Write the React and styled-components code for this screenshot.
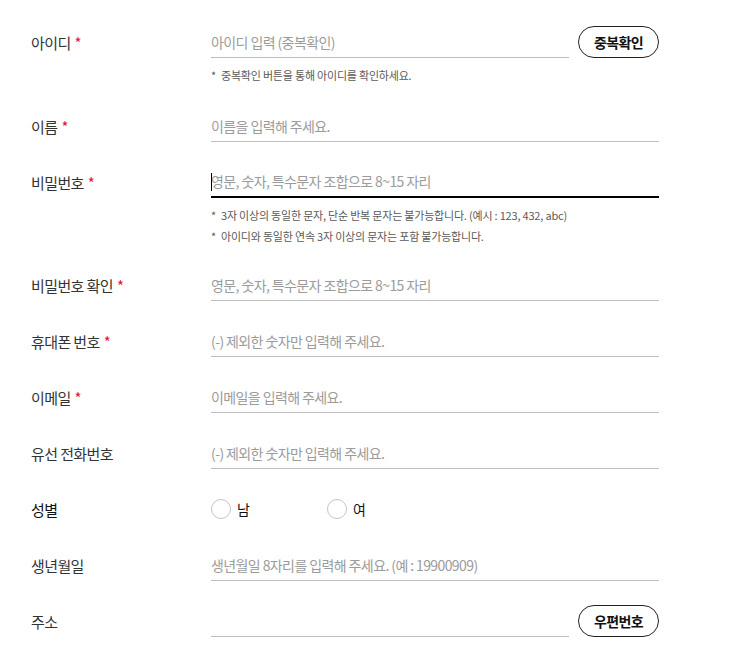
import React from "react";
import styled, { createGlobalStyle } from "styled-components";

const Global = createGlobalStyle`
  html, body { margin: 0; padding: 0; background: #fff; }
  body { font-family: "Noto Sans CJK KR", "Noto Sans", sans-serif; color: #333; }
  * { box-sizing: border-box; }
`;

const Form = styled.form`
  display: flex;
  flex-direction: column;
  gap: 24px;
  padding: 26px 0 0 31px;
  width: 659px;
`;

const Row = styled.div`
  display: grid;
  grid-template-columns: 180px 448px;
  align-items: start;
`;

const Label = styled.div`
  height: 32px;
  display: flex;
  align-items: center;
  font-size: 15px;
  letter-spacing: -0.6px;
  color: ${(p) => (p.$dark ? "#111" : "#333")};
`;

const Star = styled.span`
  color: #e2133d;
  margin-left: 4px;
`;

const Field = styled.div`
  display: flex;
  flex-direction: column;
`;

const InputLine = styled.div`
  display: flex;
  align-items: center;
  gap: 9px;
`;

const InputWrap = styled.div`
  position: relative;
  flex: 1;
`;

const Input = styled.input`
  display: block;
  width: 100%;
  height: 32px;
  border: 0;
  border-bottom: ${(p) => (p.$focus ? "2px solid #000" : "1px solid #bdbdbd")};
  padding: 0 0 ${(p) => (p.$focus ? "1px" : "0")};
  font-family: inherit;
  font-size: 14px;
  letter-spacing: -0.6px;
  color: #333;
  outline: none;
  background: transparent;
  &::placeholder { color: #9b9b9b; }
`;

const Caret = styled.span`
  position: absolute;
  left: 0;
  top: 7px;
  width: 1px;
  height: 18px;
  background: #000;
`;

const PillButton = styled.button`
  width: 81px;
  height: 32px;
  border: 1px solid #222;
  border-radius: 16px;
  background: #fff;
  font-family: inherit;
  font-size: 14px;
  font-weight: 700;
  letter-spacing: -0.6px;
  color: #111;
  cursor: pointer;
  padding: 0;
`;

const Help = styled.ul`
  list-style: none;
  margin: 7px 0 ${(p) => (p.$tight ? "-2px" : "0")};
  padding: 0;
`;

const HelpItem = styled.li`
  font-size: 11px;
  line-height: 21px;
  letter-spacing: -0.2px;
  color: #5a5a5a;
  &::before {
    content: "*";
    display: inline-block;
    width: 10px;
  }
`;

const RadioGroup = styled.div`
  display: flex;
  align-items: center;
  height: 32px;
`;

const RadioOption = styled.label`
  display: flex;
  align-items: center;
  width: 116px;
  font-size: 14px;
  color: #111;
  cursor: pointer;
`;

const Circle = styled.span`
  width: 20px;
  height: 20px;
  border: 1px solid #c4c4c4;
  border-radius: 50%;
  margin-right: 6px;
  background: #fff;
`;

export default function App() {
  return (
    <>
      <Global />
      <Form onSubmit={(e) => e.preventDefault()}>
        <Row>
          <Label>아이디<Star>*</Star></Label>
          <Field>
            <InputLine>
              <InputWrap><Input placeholder="아이디 입력 (중복확인)" /></InputWrap>
              <PillButton type="button">중복확인</PillButton>
            </InputLine>
            <Help>
              <HelpItem>중복확인 버튼을 통해 아이디를 확인하세요.</HelpItem>
            </Help>
          </Field>
        </Row>
        <Row>
          <Label>이름<Star>*</Star></Label>
          <Field><Input placeholder="이름을 입력해 주세요." /></Field>
        </Row>
        <Row>
          <Label>비밀번호<Star>*</Star></Label>
          <Field>
            <InputWrap>
              <Input type="password" $focus placeholder="영문, 숫자, 특수문자 조합으로 8~15 자리" />
              <Caret />
            </InputWrap>
            <Help $tight>
              <HelpItem>3자 이상의 동일한 문자, 단순 반복 문자는 불가능합니다. (예시 : 123, 432, abc)</HelpItem>
              <HelpItem>아이디와 동일한 연속 3자 이상의 문자는 포함 불가능합니다.</HelpItem>
            </Help>
          </Field>
        </Row>
        <Row>
          <Label>비밀번호 확인<Star>*</Star></Label>
          <Field><Input type="password" placeholder="영문, 숫자, 특수문자 조합으로 8~15 자리" /></Field>
        </Row>
        <Row>
          <Label>휴대폰 번호<Star>*</Star></Label>
          <Field><Input placeholder="(-) 제외한 숫자만 입력해 주세요." /></Field>
        </Row>
        <Row>
          <Label>이메일<Star>*</Star></Label>
          <Field><Input placeholder="이메일을 입력해 주세요." /></Field>
        </Row>
        <Row>
          <Label>유선 전화번호</Label>
          <Field><Input placeholder="(-) 제외한 숫자만 입력해 주세요." /></Field>
        </Row>
        <Row>
          <Label $dark>성별</Label>
          <RadioGroup>
            <RadioOption><Circle />남</RadioOption>
            <RadioOption><Circle />여</RadioOption>
          </RadioGroup>
        </Row>
        <Row>
          <Label>생년월일</Label>
          <Field><Input placeholder="생년월일 8자리를 입력해 주세요. (예 : 19900909)" /></Field>
        </Row>
        <Row>
          <Label>주소</Label>
          <Field>
            <InputLine>
              <InputWrap><Input /></InputWrap>
              <PillButton type="button">우편번호</PillButton>
            </InputLine>
          </Field>
        </Row>
      </Form>
    </>
  );
}
